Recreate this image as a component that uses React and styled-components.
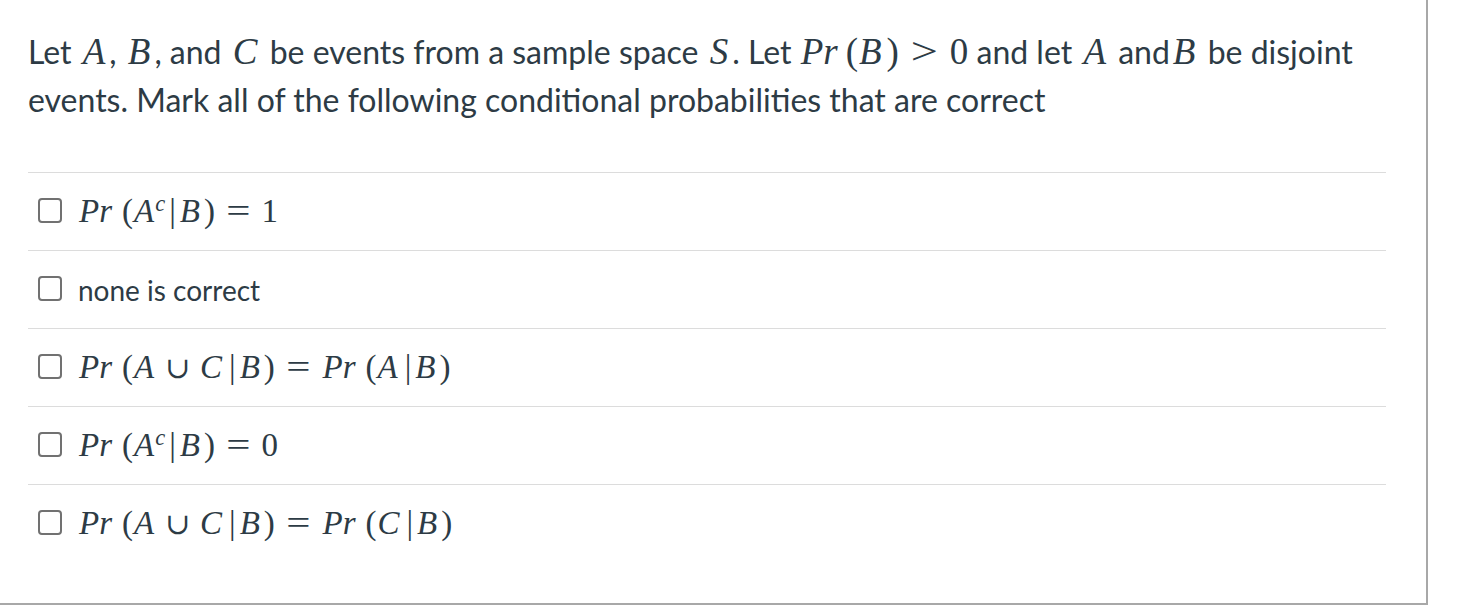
import React from "react";
import styled, { createGlobalStyle } from "styled-components";

const GlobalStyle = createGlobalStyle`
  html, body {
    margin: 0;
    padding: 0;
    background: #ffffff;
  }
  body {
    font-family: Lato, "Open Sans", sans-serif;
    color: #2d3b45;
  }
`;

// Styled components
const Panel = styled.section`
  box-sizing: border-box;
  width: 1428px;
  height: 605px;
  border-right: 2px solid #a8a8a8;
  border-bottom: 2px solid #a8a8a8;
  padding: 28px 40px 0 28px;
`;

const Question = styled.div`
  font-size: 32px;
  line-height: 48px;
  margin: 0 -30px 48px 0;
`;

const Answers = styled.div`
  display: flex;
  flex-direction: column;
`;

const Row = styled.label`
  display: flex;
  align-items: center;
  gap: 16px;
  height: 77px;
  padding-left: 10px;
  border-top: 1px solid #dcdcdc;
  font-size: 28px;
`;

const Box = styled.span`
  box-sizing: border-box;
  width: 24px;
  height: 25px;
  margin-top: -2px;
  border: 2px solid #717171;
  border-radius: 4px;
  flex-shrink: 0;
`;

const Math = styled.span`
  font-family: "Liberation Serif", "DejaVu Serif", serif;
  font-size: ${(p) => p.$size ?? 33}px;
  line-height: 1;
  white-space: nowrap;
`;

const V = styled.i`
  font-style: italic;
  padding-left: ${(p) => p.$l ?? 1}px;
  padding-right: ${(p) => p.$r ?? 4}px;
`;

const Op = styled.span`
  display: inline-block;
  margin: 0 ${(p) => p.$pad ?? 14}px;
  transform: scaleX(${(p) => p.$sx ?? 1.3});
`;

const Cup = styled.span`
  font-family: "DejaVu Serif", serif;
  font-size: 0.9em;
  margin: 0 9px 0 8px;
`;

const Sup = styled.sup`
  font-size: 0.68em;
  font-style: italic;
  vertical-align: 0.5em;
  line-height: 0;
  padding-right: 1px;
`;

const Bar = styled.span`
  padding: 0 3px;
`;

const Pr = ({ gap = 10 }) => <V $r={gap}>Pr</V>;

const answers = [
  <Math>
    <Pr />(<V $r={1}>A</V><Sup>c</Sup><Bar>|</Bar><V>B</V>)<Op>=</Op>1
  </Math>,
  <span>none is correct</span>,
  <Math>
    <Pr />(<V $r={3}>A</V><Cup>∪</Cup><V>C</V><Bar>|</Bar><V>B</V>)<Op>=</Op>
    <Pr />(<V>A</V><Bar>|</Bar><V>B</V>)
  </Math>,
  <Math>
    <Pr />(<V $r={1}>A</V><Sup>c</Sup><Bar>|</Bar><V>B</V>)<Op>=</Op>0
  </Math>,
  <Math>
    <Pr />(<V $r={3}>A</V><Cup>∪</Cup><V>C</V><Bar>|</Bar><V>B</V>)<Op>=</Op>
    <Pr />(<V>C</V><Bar>|</Bar><V>B</V>)
  </Math>,
];

// inline variable inside the question sentence
const QV = ({ children }) => (
  <Math $size={37}>
    <V $l={3} $r={4}>{children}</V>
  </Math>
);

export default function App() {
  return (
    <>
      <GlobalStyle />
      <Panel>
        <Question>
          Let <QV>A</QV>, <QV>B</QV>, and <QV>C</QV> be events from a sample
          space <QV>S</QV>. Let{" "}
          <Math $size={37}>
            <Pr gap={8} />(<V $r={5}>B</V>)<Op $pad={15}>&gt;</Op>0
          </Math>{" "}
          and let <QV>A</QV> and<QV>B</QV> be disjoint
          <br />
          events. Mark all of the following conditional probabilities that are
          correct
        </Question>
        <Answers>
          {answers.map((a, i) => (
            <Row key={i}>
              <Box />
              {a}
            </Row>
          ))}
        </Answers>
      </Panel>
    </>
  );
}
